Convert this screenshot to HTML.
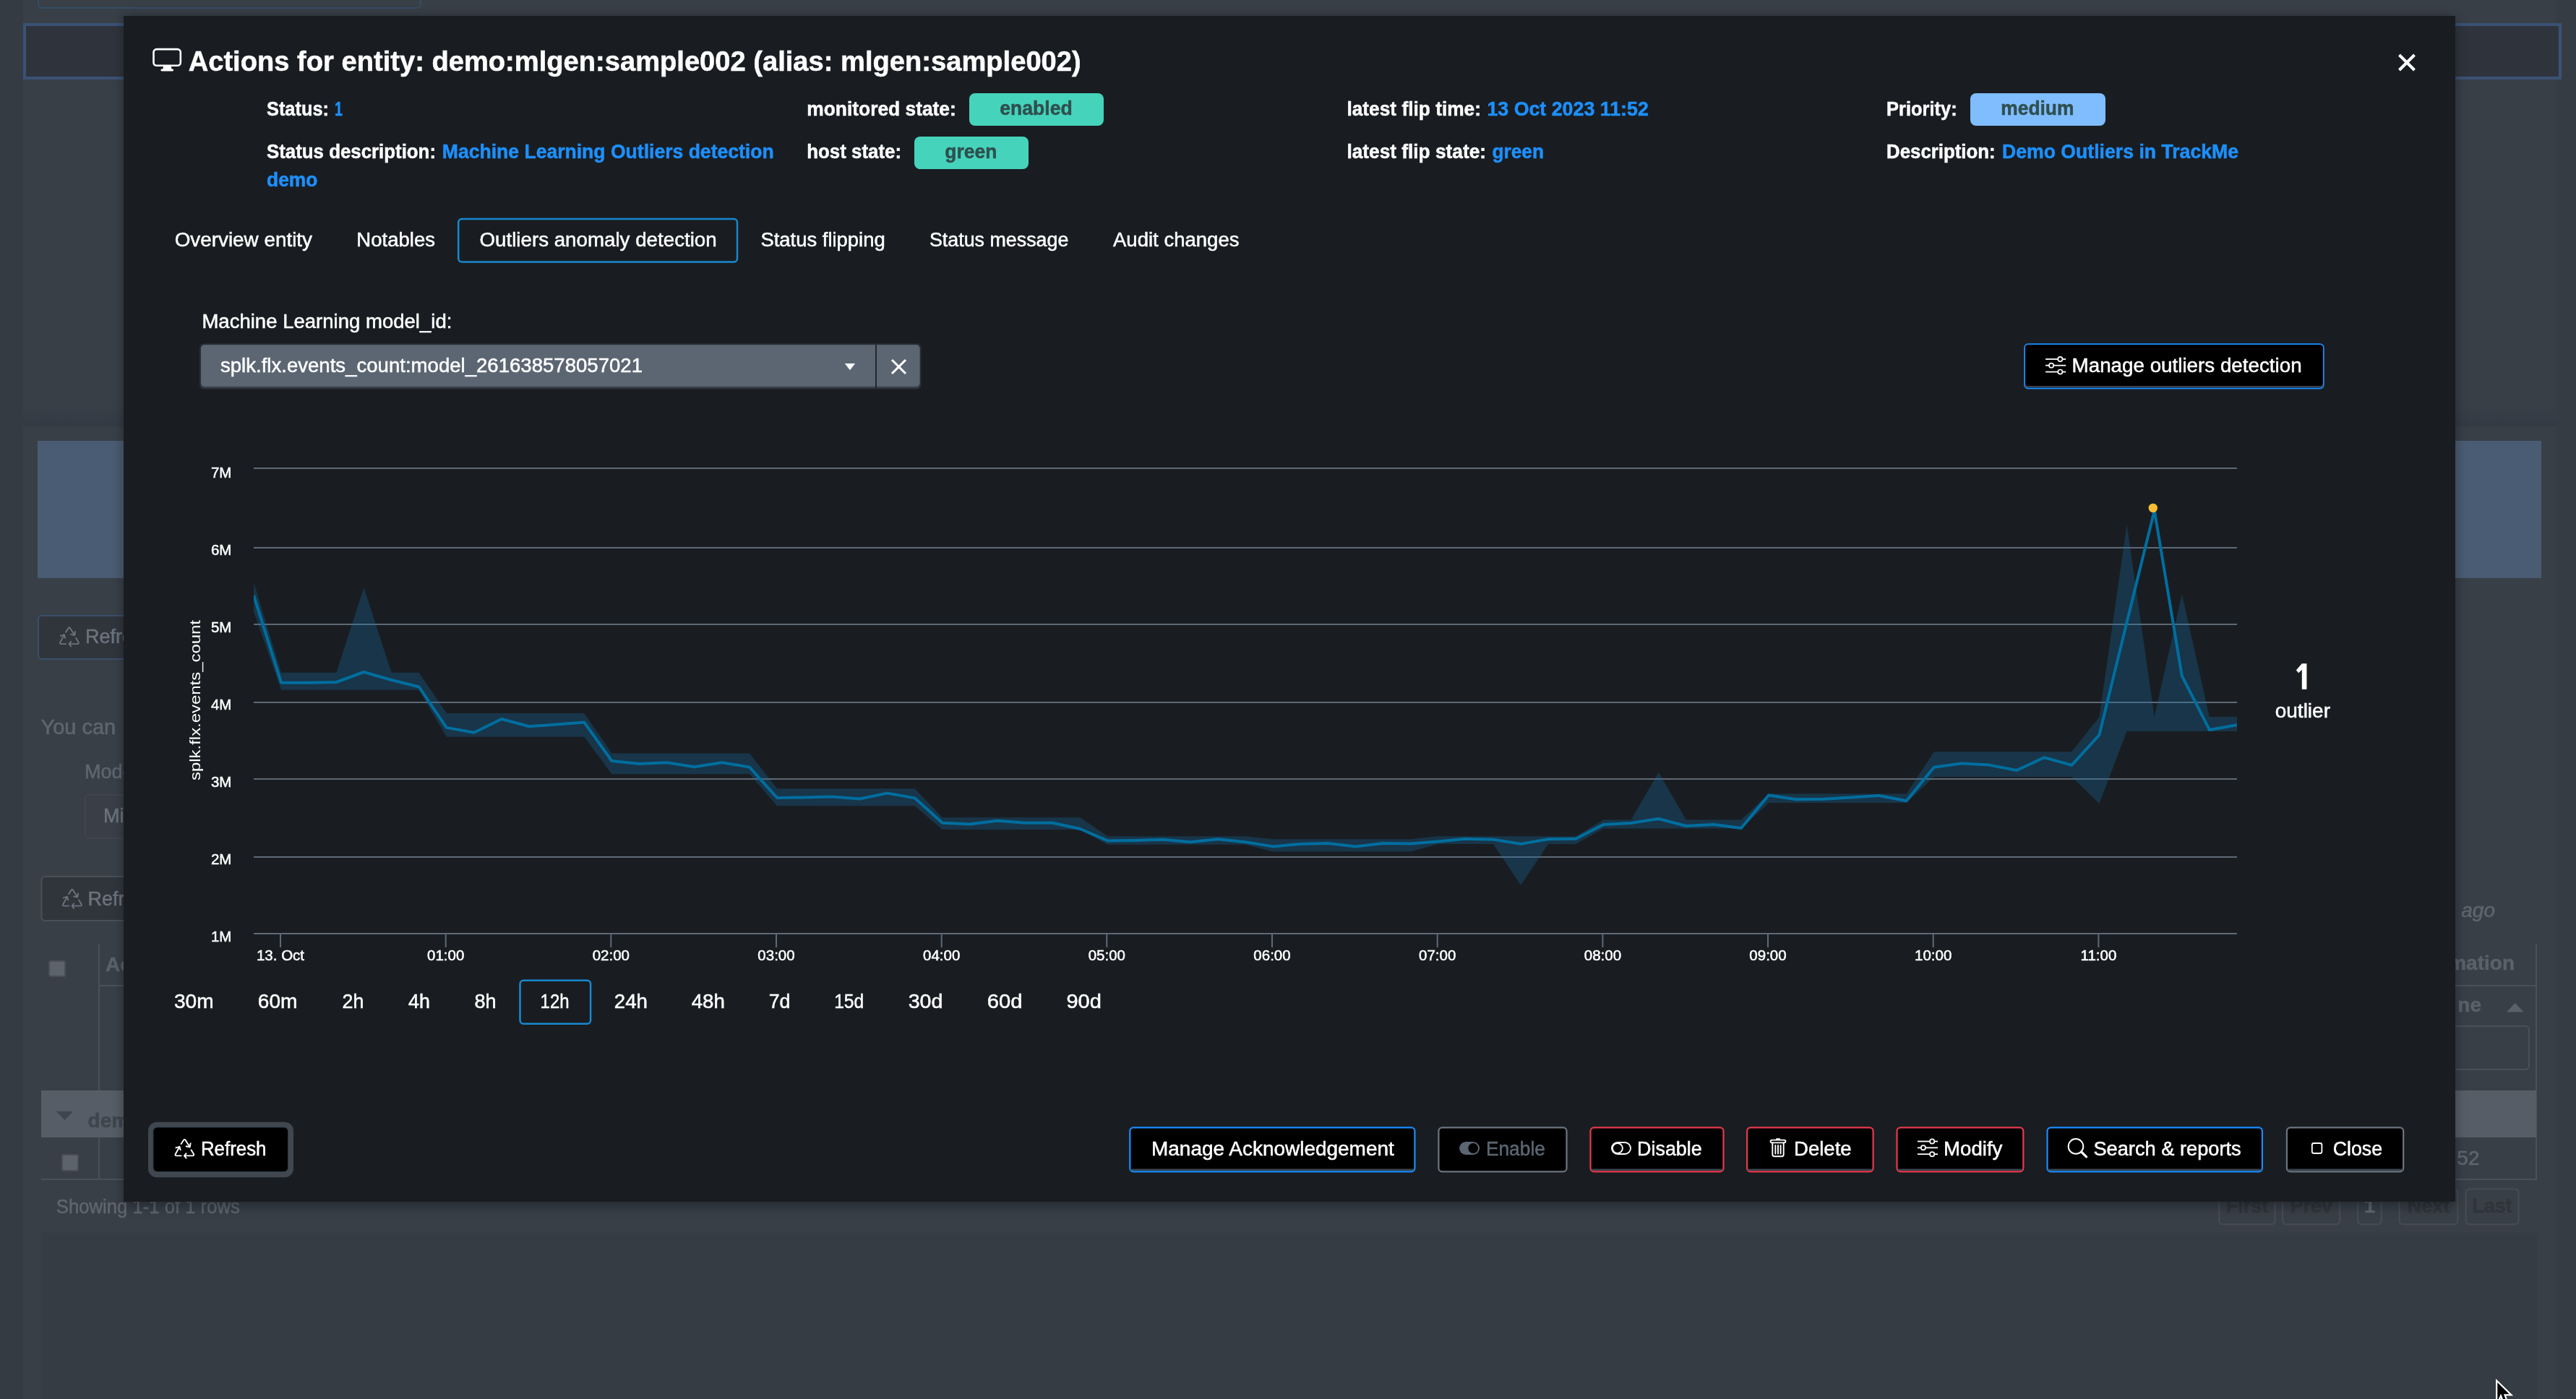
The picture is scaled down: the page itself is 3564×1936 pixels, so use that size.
<!DOCTYPE html>
<html><head><meta charset="utf-8"><title>Actions for entity</title>
<style>
html,body{margin:0;padding:0;width:3564px;height:1936px;overflow:hidden;background:#383f47;}
svg{display:block;font-family:"Liberation Sans", sans-serif;will-change:transform;}
</style></head><body>
<svg width="3564" height="1936" viewBox="0 0 3564 1936">
<rect x="0.0" y="0.0" width="3564.0" height="1936.0" rx="0" fill="#383f47" />
<rect x="0.0" y="0.0" width="32.0" height="1936.0" rx="0" fill="#343b43" />
<rect x="3536.0" y="0.0" width="28.0" height="1936.0" rx="0" fill="#353c44" />
<rect x="53" y="-20" width="529" height="31" rx="5" fill="none" stroke="#344d66" stroke-width="2"/>
<rect x="34.0" y="34.0" width="3508.0" height="74.0" rx="0.0" fill="#2f343c" stroke="#3a5275" stroke-width="4" />
<defs><linearGradient id="bandg" x1="0" y1="0" x2="0" y2="1"><stop offset="0" stop-color="#343a44" stop-opacity="0"/><stop offset="1" stop-color="#343a44" stop-opacity="1"/></linearGradient></defs>
<rect x="32" y="560" width="3504" height="30" fill="url(#bandg)"/>
<rect x="52.0" y="610.0" width="3464.0" height="190.0" rx="0" fill="#4a5c73" />
<rect x="53.0" y="852.0" width="346.0" height="60.0" rx="5.0" fill="#30353c" stroke="#3b4f6c" stroke-width="2" />
<g transform="translate(82 867.5) scale(1.004) translate(-241.5 -1575.9)" fill="none" stroke="#6b737d" stroke-width="1.9" stroke-linecap="round" stroke-linejoin="round"><path d="M250.6 1583 L254 1577.8 Q255.3 1576 256.6 1577.8 L262.6 1587.2"/><path d="M263.6 1582.3 L262.6 1587.4 L257.6 1586.3"/><path d="M264.6 1591.4 L268 1597 Q268.8 1599.4 266.5 1599.4 L255.5 1599.4"/><path d="M257.6 1596.2 L255 1599.4 L257.6 1602.6"/><path d="M250.6 1599.4 L244 1599.4 Q241.6 1599.2 242.8 1597 L248.4 1587"/><path d="M243.3 1588.3 L248.3 1586.8 L249.7 1591.4"/></g>
<text x="118.0" y="889.6" font-size="27" fill="#6b737d" stroke="#6b737d" stroke-width="0.5" >Refresh</text>
<text x="56.5" y="1016.0" font-size="29" fill="#5f6670" stroke="#5f6670" stroke-width="0.5" >You can</text>
<text x="117.0" y="1077.0" font-size="27" fill="#5f6670" stroke="#5f6670" stroke-width="0.5" >Model</text>
<rect x="118.0" y="1100.0" width="281.0" height="60.0" rx="5.0" fill="#3a3f47" stroke="#40454d" stroke-width="2" />
<text x="143.0" y="1138.0" font-size="27" fill="#6b737d" stroke="#6b737d" stroke-width="0.5" >Mi</text>
<rect x="57.5" y="1213.0" width="341.5" height="61.0" rx="5.0" fill="#30353c" stroke="#4a5058" stroke-width="2" />
<g transform="translate(86 1230) scale(1.004) translate(-241.5 -1575.9)" fill="none" stroke="#6b737d" stroke-width="1.9" stroke-linecap="round" stroke-linejoin="round"><path d="M250.6 1583 L254 1577.8 Q255.3 1576 256.6 1577.8 L262.6 1587.2"/><path d="M263.6 1582.3 L262.6 1587.4 L257.6 1586.3"/><path d="M264.6 1591.4 L268 1597 Q268.8 1599.4 266.5 1599.4 L255.5 1599.4"/><path d="M257.6 1596.2 L255 1599.4 L257.6 1602.6"/><path d="M250.6 1599.4 L244 1599.4 Q241.6 1599.2 242.8 1597 L248.4 1587"/><path d="M243.3 1588.3 L248.3 1586.8 L249.7 1591.4"/></g>
<text x="121.6" y="1253.0" font-size="27" fill="#6b737d" stroke="#6b737d" stroke-width="0.5" >Refresh</text>
<line x1="137" y1="1306" x2="137" y2="1509" stroke="#4b5159" stroke-width="2"/>
<line x1="137" y1="1574" x2="137" y2="1633" stroke="#4b5159" stroke-width="2"/>
<line x1="137" y1="1364" x2="3509" y2="1364" stroke="#4b5159" stroke-width="2"/>
<line x1="3509" y1="1306" x2="3509" y2="1633" stroke="#4b5159" stroke-width="2"/>
<rect x="68.0" y="1330.0" width="22.0" height="21.0" rx="2.0" fill="#5c636b" stroke="#4a4f57" stroke-width="2" />
<text x="146.0" y="1344.0" font-size="28" fill="#5a616a" stroke="#5a616a" stroke-width="0.5" font-weight="bold" >Ac</text>
<rect x="57.0" y="1509.0" width="3452.0" height="65.0" rx="0" fill="#565d66" />
<path d="M78 1538 L101 1538 L89.5 1550 Z" fill="#3f454d"/>
<text x="121.6" y="1560.0" font-size="28" fill="#3f454d" stroke="#3f454d" stroke-width="0.5" font-weight="bold" >dem</text>
<rect x="86.0" y="1598.0" width="22.0" height="22.0" rx="2.0" fill="#5c636b" stroke="#4a4f57" stroke-width="2" />
<line x1="57" y1="1632" x2="3509" y2="1632" stroke="#4b5159" stroke-width="2"/>
<text x="77.8" y="1679.0" font-size="27" fill="#5f6670" stroke="#5f6670" stroke-width="0.5" textLength="254.0" lengthAdjust="spacingAndGlyphs" >Showing 1-1 of 1 rows</text>
<rect x="57.0" y="1706.0" width="3453.0" height="230.0" rx="0" fill="#353c44" />
<text x="3452.0" y="1269.0" font-size="28" fill="#5f6670" stroke="#5f6670" stroke-width="0.5" font-style="italic" text-anchor="end">seconds ago</text>
<text x="3479.0" y="1342.0" font-size="28" fill="#5a616a" stroke="#5a616a" stroke-width="0.5" font-weight="bold" text-anchor="end">Information</text>
<text x="3433.0" y="1400.0" font-size="28" fill="#5a616a" stroke="#5a616a" stroke-width="0.5" font-weight="bold" text-anchor="end">ne</text>
<path d="M3468 1400.5 L3491.6 1400.5 L3479.8 1388 Z" fill="#5a616a"/>
<rect x="3301.0" y="1420.0" width="198.0" height="60.0" rx="5.0" fill="none" stroke="#4a5058" stroke-width="2" />
<text x="3430.5" y="1612.0" font-size="28" fill="#5f6670" stroke="#5f6670" stroke-width="0.5" text-anchor="end">11:52</text>
<rect x="3070.4" y="1645.4" width="77.1" height="48.8" rx="5.0" fill="none" stroke="#474d55" stroke-width="2" />
<text x="3108.9" y="1677.7" font-size="27" fill="#30353c" stroke="#30353c" stroke-width="0.5" font-weight="bold" text-anchor="middle" >First</text>
<rect x="3158.2" y="1645.4" width="79.0" height="48.8" rx="5.0" fill="none" stroke="#474d55" stroke-width="2" />
<text x="3197.7" y="1677.7" font-size="27" fill="#30353c" stroke="#30353c" stroke-width="0.5" font-weight="bold" text-anchor="middle" >Prev</text>
<rect x="3262.2" y="1645.4" width="32.4" height="48.8" rx="5.0" fill="none" stroke="#474d55" stroke-width="2" />
<text x="3278.4" y="1677.7" font-size="27" fill="#5f6670" stroke="#5f6670" stroke-width="0.5" font-weight="bold" text-anchor="middle" >1</text>
<rect x="3319.6" y="1645.4" width="80.8" height="48.8" rx="5.0" fill="none" stroke="#474d55" stroke-width="2" />
<text x="3360.0" y="1677.7" font-size="27" fill="#30353c" stroke="#30353c" stroke-width="0.5" font-weight="bold" text-anchor="middle" >Next</text>
<rect x="3411.6" y="1645.4" width="73.1" height="48.8" rx="5.0" fill="none" stroke="#474d55" stroke-width="2" />
<text x="3448.1" y="1677.7" font-size="27" fill="#30353c" stroke="#30353c" stroke-width="0.5" font-weight="bold" text-anchor="middle" >Last</text>
<path d="M3454.2 1910.5 L3454.2 1944 L3460 1931.5 L3465 1944 L3470 1942 L3465.5 1930.4 L3474.5 1930.4 Z" fill="#000" stroke="#fff" stroke-width="2.2" stroke-linejoin="miter"/>
<defs><filter id="sh" x="-5%" y="-5%" width="110%" height="110%"><feGaussianBlur stdDeviation="8"/></filter></defs>
<rect x="171" y="24" width="3226" height="1645" fill="#000" opacity="0.35" filter="url(#sh)"/>
<rect x="171.0" y="22.0" width="3226.0" height="1641.0" rx="0" fill="#191d21" />
<rect x="212.5" y="68.1" width="37.3" height="22.6" rx="4.2" fill="none" stroke="#fff" stroke-width="2.6"/>
<path d="M226 91 L236.8 91 L237.4 96 L225.4 96 Z" fill="#fff"/>
<rect x="222.4" y="95.5" width="17.7" height="2.9" rx="1.4" fill="#fff"/>
<text x="260.7" y="97.6" font-size="38.5" fill="#ffffff" stroke="#ffffff" stroke-width="0.5" font-weight="bold" textLength="1235.0" lengthAdjust="spacingAndGlyphs" >Actions for entity: demo:mlgen:sample002 (alias: mlgen:sample002)</text>
<path d="M3319.5 76 L3340.5 97 M3340.5 76 L3319.5 97" stroke="#fff" stroke-width="4" stroke-linecap="butt"/>
<text x="369.0" y="159.6" font-size="27" fill="#ffffff" stroke="#ffffff" stroke-width="0.5" font-weight="bold" textLength="86.0" lengthAdjust="spacingAndGlyphs" >Status:</text>
<text x="463.0" y="159.6" font-size="27" fill="#1d90ff" stroke="#1d90ff" stroke-width="0.5" font-weight="bold" textLength="11.0" lengthAdjust="spacingAndGlyphs" >1</text>
<text x="1116.3" y="159.6" font-size="27" fill="#ffffff" stroke="#ffffff" stroke-width="0.5" font-weight="bold" textLength="206.5" lengthAdjust="spacingAndGlyphs" >monitored state:</text>
<rect x="1341.0" y="129.0" width="186.0" height="45.0" rx="8" fill="#45d4bb" />
<text x="1383.3" y="158.8" font-size="27" fill="#2f4f4f" stroke="#2f4f4f" stroke-width="0.5" font-weight="bold" textLength="100.4" lengthAdjust="spacingAndGlyphs" >enabled</text>
<text x="1863.4" y="159.6" font-size="27" fill="#ffffff" stroke="#ffffff" stroke-width="0.5" font-weight="bold" textLength="185.6" lengthAdjust="spacingAndGlyphs" >latest flip time:</text>
<text x="2057.4" y="159.6" font-size="27" fill="#1d90ff" stroke="#1d90ff" stroke-width="0.5" font-weight="bold" textLength="223.4" lengthAdjust="spacingAndGlyphs" >13 Oct 2023 11:52</text>
<text x="2610.0" y="159.6" font-size="27" fill="#ffffff" stroke="#ffffff" stroke-width="0.5" font-weight="bold" textLength="97.7" lengthAdjust="spacingAndGlyphs" >Priority:</text>
<rect x="2726.0" y="129.0" width="187.0" height="45.0" rx="8" fill="#80bdff" />
<text x="2768.3" y="159.0" font-size="27" fill="#2f4f4f" stroke="#2f4f4f" stroke-width="0.5" font-weight="bold" textLength="101.1" lengthAdjust="spacingAndGlyphs" >medium</text>
<text x="369.0" y="219.3" font-size="27" fill="#ffffff" stroke="#ffffff" stroke-width="0.5" font-weight="bold" textLength="234.0" lengthAdjust="spacingAndGlyphs" >Status description:</text>
<text x="611.8" y="219.3" font-size="27" fill="#1d90ff" stroke="#1d90ff" stroke-width="0.5" font-weight="bold" textLength="458.9" lengthAdjust="spacingAndGlyphs" >Machine Learning Outliers detection</text>
<text x="369.0" y="258.0" font-size="27" fill="#1d90ff" stroke="#1d90ff" stroke-width="0.5" font-weight="bold" textLength="70.5" lengthAdjust="spacingAndGlyphs" >demo</text>
<text x="1116.3" y="219.3" font-size="27" fill="#ffffff" stroke="#ffffff" stroke-width="0.5" font-weight="bold" textLength="130.7" lengthAdjust="spacingAndGlyphs" >host state:</text>
<rect x="1265.0" y="189.0" width="158.0" height="45.0" rx="8" fill="#45d4bb" />
<text x="1307.3" y="219.3" font-size="27" fill="#2f4f4f" stroke="#2f4f4f" stroke-width="0.5" font-weight="bold" textLength="72.0" lengthAdjust="spacingAndGlyphs" >green</text>
<text x="1863.4" y="219.3" font-size="27" fill="#ffffff" stroke="#ffffff" stroke-width="0.5" font-weight="bold" textLength="192.6" lengthAdjust="spacingAndGlyphs" >latest flip state:</text>
<text x="2064.5" y="219.3" font-size="27" fill="#1d90ff" stroke="#1d90ff" stroke-width="0.5" font-weight="bold" textLength="71.5" lengthAdjust="spacingAndGlyphs" >green</text>
<text x="2610.0" y="219.3" font-size="27" fill="#ffffff" stroke="#ffffff" stroke-width="0.5" font-weight="bold" textLength="150.7" lengthAdjust="spacingAndGlyphs" >Description:</text>
<text x="2770.0" y="219.3" font-size="27" fill="#1d90ff" stroke="#1d90ff" stroke-width="0.5" font-weight="bold" textLength="327.0" lengthAdjust="spacingAndGlyphs" >Demo Outliers in TrackMe</text>
<text x="241.7" y="341.2" font-size="27" fill="#ffffff" stroke="#ffffff" stroke-width="0.5" textLength="190.3" lengthAdjust="spacingAndGlyphs" >Overview entity</text>
<text x="493.3" y="341.2" font-size="27" fill="#ffffff" stroke="#ffffff" stroke-width="0.5" textLength="108.7" lengthAdjust="spacingAndGlyphs" >Notables</text>
<rect x="634.2" y="302.9" width="385.8" height="59.6" rx="4.8" fill="none" stroke="#1789d0" stroke-width="2.5" />
<text x="663.5" y="341.2" font-size="27" fill="#ffffff" stroke="#ffffff" stroke-width="0.5" textLength="328.2" lengthAdjust="spacingAndGlyphs" >Outliers anomaly detection</text>
<text x="1052.4" y="341.2" font-size="27" fill="#ffffff" stroke="#ffffff" stroke-width="0.5" textLength="172.3" lengthAdjust="spacingAndGlyphs" >Status flipping</text>
<text x="1285.9" y="341.2" font-size="27" fill="#ffffff" stroke="#ffffff" stroke-width="0.5" textLength="192.5" lengthAdjust="spacingAndGlyphs" >Status message</text>
<text x="1540.0" y="341.2" font-size="27" fill="#ffffff" stroke="#ffffff" stroke-width="0.5" textLength="174.5" lengthAdjust="spacingAndGlyphs" >Audit changes</text>
<text x="279.4" y="453.6" font-size="27" fill="#ffffff" stroke="#ffffff" stroke-width="0.5" textLength="346.0" lengthAdjust="spacingAndGlyphs" >Machine Learning model_id:</text>
<rect x="276.0" y="475.2" width="998.5" height="63.5" rx="6" fill="#2a2f35" />
<rect x="278.0" y="477.2" width="994.5" height="59.5" rx="5" fill="#3d4450" />
<rect x="278.0" y="477.2" width="994.5" height="57.5" rx="5" fill="#5c6673" />
<rect x="1211.0" y="477.0" width="2.0" height="60.0" rx="0" fill="#22272c" />
<text x="305.0" y="515.0" font-size="27" fill="#ffffff" stroke="#ffffff" stroke-width="0.5" textLength="584.0" lengthAdjust="spacingAndGlyphs" >splk.flx.events_count:model_261638578057021</text>
<path d="M1168.8 502.9 L1183.1 502.9 L1176 512.2 Z" fill="#fff"/>
<path d="M1234 498 L1253 517 M1253 498 L1234 517" stroke="#fff" stroke-width="3"/>
<rect x="2801.2" y="476.2" width="413.5" height="61.4" rx="5.0" fill="#000" stroke="#1a8cff" stroke-width="2" />
<rect x="2802.5" y="532" width="411" height="4" fill="#3a4048"/>
<rect x="2802.2" y="477.2" width="411.5" height="56.8" rx="4" fill="#000" />
<line x1="2830.1" y1="497" x2="2858.2" y2="497" stroke="#fff" stroke-width="1.8"/>
<circle cx="2850.4" cy="497" r="3.1" fill="#000" stroke="#fff" stroke-width="1.7"/>
<line x1="2830.1" y1="505.7" x2="2858.2" y2="505.7" stroke="#fff" stroke-width="1.8"/>
<circle cx="2838.1" cy="505.7" r="3.1" fill="#000" stroke="#fff" stroke-width="1.7"/>
<line x1="2830.1" y1="514.6" x2="2858.2" y2="514.6" stroke="#fff" stroke-width="1.8"/>
<circle cx="2850.4" cy="514.6" r="3.1" fill="#000" stroke="#fff" stroke-width="1.7"/>
<text x="2866.6" y="514.5" font-size="27" fill="#ffffff" stroke="#ffffff" stroke-width="0.5" textLength="318.0" lengthAdjust="spacingAndGlyphs" >Manage outliers detection</text>
<rect x="351" y="647" width="2744" height="2" fill="#5f6976"/>
<text x="320.4" y="661.2" font-size="20.5" fill="#ffffff" stroke="#ffffff" stroke-width="0.5" text-anchor="end" >7M</text>
<rect x="351" y="757" width="2744" height="2" fill="#5f6976"/>
<text x="320.4" y="768.2" font-size="20.5" fill="#ffffff" stroke="#ffffff" stroke-width="0.5" text-anchor="end" >6M</text>
<rect x="351" y="863" width="2744" height="2" fill="#5f6976"/>
<text x="320.4" y="875.1" font-size="20.5" fill="#ffffff" stroke="#ffffff" stroke-width="0.5" text-anchor="end" >5M</text>
<rect x="351" y="971" width="2744" height="2" fill="#5f6976"/>
<text x="320.4" y="982.1" font-size="20.5" fill="#ffffff" stroke="#ffffff" stroke-width="0.5" text-anchor="end" >4M</text>
<rect x="351" y="1077" width="2744" height="2" fill="#5f6976"/>
<text x="320.4" y="1089.0" font-size="20.5" fill="#ffffff" stroke="#ffffff" stroke-width="0.5" text-anchor="end" >3M</text>
<rect x="351" y="1185" width="2744" height="2" fill="#5f6976"/>
<text x="320.4" y="1196.0" font-size="20.5" fill="#ffffff" stroke="#ffffff" stroke-width="0.5" text-anchor="end" >2M</text>
<rect x="351" y="1291" width="2744" height="2" fill="#5f6976"/>
<text x="320.4" y="1302.9" font-size="20.5" fill="#ffffff" stroke="#ffffff" stroke-width="0.5" text-anchor="end" >1M</text>
<rect x="387.0" y="1292" width="2" height="19" fill="#5f6976"/>
<text x="388.0" y="1329.0" font-size="20.5" fill="#ffffff" stroke="#ffffff" stroke-width="0.5" text-anchor="middle" >13. Oct</text>
<rect x="615.7" y="1292" width="2" height="19" fill="#5f6976"/>
<text x="616.7" y="1329.0" font-size="20.5" fill="#ffffff" stroke="#ffffff" stroke-width="0.5" text-anchor="middle" >01:00</text>
<rect x="844.3" y="1292" width="2" height="19" fill="#5f6976"/>
<text x="845.3" y="1329.0" font-size="20.5" fill="#ffffff" stroke="#ffffff" stroke-width="0.5" text-anchor="middle" >02:00</text>
<rect x="1073.0" y="1292" width="2" height="19" fill="#5f6976"/>
<text x="1074.0" y="1329.0" font-size="20.5" fill="#ffffff" stroke="#ffffff" stroke-width="0.5" text-anchor="middle" >03:00</text>
<rect x="1301.7" y="1292" width="2" height="19" fill="#5f6976"/>
<text x="1302.7" y="1329.0" font-size="20.5" fill="#ffffff" stroke="#ffffff" stroke-width="0.5" text-anchor="middle" >04:00</text>
<rect x="1530.3" y="1292" width="2" height="19" fill="#5f6976"/>
<text x="1531.3" y="1329.0" font-size="20.5" fill="#ffffff" stroke="#ffffff" stroke-width="0.5" text-anchor="middle" >05:00</text>
<rect x="1759.0" y="1292" width="2" height="19" fill="#5f6976"/>
<text x="1760.0" y="1329.0" font-size="20.5" fill="#ffffff" stroke="#ffffff" stroke-width="0.5" text-anchor="middle" >06:00</text>
<rect x="1987.7" y="1292" width="2" height="19" fill="#5f6976"/>
<text x="1988.7" y="1329.0" font-size="20.5" fill="#ffffff" stroke="#ffffff" stroke-width="0.5" text-anchor="middle" >07:00</text>
<rect x="2216.4" y="1292" width="2" height="19" fill="#5f6976"/>
<text x="2217.4" y="1329.0" font-size="20.5" fill="#ffffff" stroke="#ffffff" stroke-width="0.5" text-anchor="middle" >08:00</text>
<rect x="2445.0" y="1292" width="2" height="19" fill="#5f6976"/>
<text x="2446.0" y="1329.0" font-size="20.5" fill="#ffffff" stroke="#ffffff" stroke-width="0.5" text-anchor="middle" >09:00</text>
<rect x="2673.7" y="1292" width="2" height="19" fill="#5f6976"/>
<text x="2674.7" y="1329.0" font-size="20.5" fill="#ffffff" stroke="#ffffff" stroke-width="0.5" text-anchor="middle" >10:00</text>
<rect x="2902.4" y="1292" width="2" height="19" fill="#5f6976"/>
<text x="2903.4" y="1329.0" font-size="20.5" fill="#ffffff" stroke="#ffffff" stroke-width="0.5" text-anchor="middle" >11:00</text>
<text x="0" y="0" font-size="21" fill="#fff" text-anchor="middle" transform="translate(276.6 969) rotate(-90)" textLength="222" lengthAdjust="spacingAndGlyphs">splk.flx.events_count</text>
<polygon points="351.0,805.7 389.1,930.8 427.2,930.8 465.3,930.8 503.4,813.2 541.6,930.8 579.7,930.8 617.8,987.0 655.9,987.0 694.0,987.0 732.1,987.0 770.2,987.0 808.3,987.0 846.4,1042.5 884.6,1042.5 922.7,1042.5 960.8,1042.5 998.9,1042.5 1037.0,1042.5 1075.1,1091.2 1113.2,1091.2 1151.3,1091.2 1189.4,1091.2 1227.6,1091.2 1265.7,1091.2 1303.8,1131.3 1341.9,1131.3 1380.0,1131.3 1418.1,1131.3 1456.2,1131.3 1494.3,1131.3 1532.4,1157.2 1570.6,1157.2 1608.7,1157.2 1646.8,1157.2 1684.9,1157.2 1723.0,1157.2 1761.1,1161.2 1799.2,1161.2 1837.3,1161.2 1875.4,1161.2 1913.6,1161.2 1951.7,1161.2 1989.8,1157.2 2027.9,1157.2 2066.0,1157.2 2104.1,1157.2 2142.2,1157.2 2180.3,1157.2 2218.4,1134.5 2256.6,1134.5 2294.7,1068.8 2332.8,1134.5 2370.9,1134.5 2409.0,1134.5 2447.1,1098.6 2485.2,1098.6 2523.3,1098.6 2561.4,1098.6 2599.6,1098.6 2637.7,1098.6 2675.8,1040.3 2713.9,1040.3 2752.0,1040.3 2790.1,1040.3 2828.2,1040.3 2866.3,1040.3 2904.4,992.0 2942.6,726.3 2980.7,991.6 3018.8,822.3 3056.9,992.0 3095.0,992.0 3095.0,1012.0 3056.9,1012.0 3018.8,1012.0 2980.7,1012.0 2942.6,1012.0 2904.4,1112.1 2866.3,1075.0 2828.2,1075.0 2790.1,1075.0 2752.0,1075.0 2713.9,1075.0 2675.8,1075.0 2637.7,1111.0 2599.6,1111.0 2561.4,1111.0 2523.3,1111.0 2485.2,1111.0 2447.1,1111.0 2409.0,1146.5 2370.9,1146.5 2332.8,1146.5 2294.7,1146.5 2256.6,1146.5 2218.4,1146.5 2180.3,1167.9 2142.2,1167.9 2104.1,1225.0 2066.0,1167.9 2027.9,1167.9 1989.8,1167.9 1951.7,1178.6 1913.6,1178.6 1875.4,1178.6 1837.3,1178.6 1799.2,1178.6 1761.1,1178.6 1723.0,1168.8 1684.9,1168.8 1646.8,1168.8 1608.7,1168.8 1570.6,1168.8 1532.4,1168.8 1494.3,1148.0 1456.2,1148.0 1418.1,1148.0 1380.0,1148.0 1341.9,1148.0 1303.8,1148.0 1265.7,1115.3 1227.6,1115.3 1189.4,1115.3 1151.3,1115.3 1113.2,1115.3 1075.1,1115.3 1037.0,1071.3 998.9,1071.3 960.8,1071.3 922.7,1071.3 884.6,1071.3 846.4,1071.3 808.3,1019.8 770.2,1019.8 732.1,1019.8 694.0,1019.8 655.9,1019.8 617.8,1019.8 579.7,954.8 541.6,954.8 503.4,954.8 465.3,954.8 427.2,954.8 389.1,954.8 351.0,846.5" fill="rgb(20,120,180)" fill-opacity="0.28"/>
<clipPath id="plot"><rect x="351" y="600" width="2744" height="700"/></clipPath>
<polyline points="351.0,824.0 389.1,944.7 427.2,944.7 465.3,944.0 503.4,930.0 541.6,941.0 579.7,950.5 617.8,1006.9 655.9,1013.8 694.0,995.0 732.1,1005.3 770.2,1002.6 808.3,999.6 846.4,1053.0 884.6,1056.9 922.7,1055.2 960.8,1061.2 998.9,1055.2 1037.0,1061.6 1075.1,1104.0 1113.2,1103.5 1151.3,1102.5 1189.4,1105.5 1227.6,1097.6 1265.7,1104.4 1303.8,1138.8 1341.9,1140.5 1380.0,1135.8 1418.1,1138.8 1456.2,1138.8 1494.3,1147.0 1532.4,1163.4 1570.6,1162.9 1608.7,1161.7 1646.8,1165.3 1684.9,1161.2 1723.0,1165.3 1761.1,1171.4 1799.2,1167.9 1837.3,1167.0 1875.4,1171.4 1913.6,1167.0 1951.7,1167.4 1989.8,1164.4 2027.9,1160.8 2066.0,1161.7 2104.1,1167.9 2142.2,1161.2 2180.3,1160.8 2218.4,1141.0 2256.6,1139.0 2294.7,1133.0 2332.8,1143.0 2370.9,1141.1 2409.0,1146.0 2447.1,1100.4 2485.2,1106.3 2523.3,1105.7 2561.4,1103.6 2599.6,1101.0 2637.7,1108.3 2675.8,1061.7 2713.9,1056.4 2752.0,1058.6 2790.1,1066.0 2828.2,1048.3 2866.3,1058.9 2904.4,1017.1 2942.6,861.0 2980.7,706.4 3018.8,935.3 3056.9,1010.0 3095.0,1003.3" fill="none" stroke="#006e9f" stroke-width="4" stroke-linejoin="round" clip-path="url(#plot)"/>
<circle cx="2978.8" cy="703" r="6.2" fill="#f8be34"/>
<path d="M3184.8 918.2 L3191.4 918.2 L3191.4 954.1 L3184.8 954.1 L3184.8 926.8 L3180.2 931.2 L3176.8 927.6 Z" fill="#fff"/>
<text x="3147.7" y="993.2" font-size="27" fill="#ffffff" stroke="#ffffff" stroke-width="0.5" textLength="76.3" lengthAdjust="spacingAndGlyphs" >outlier</text>
<text x="241.0" y="1394.8" font-size="27" fill="#ffffff" stroke="#ffffff" stroke-width="0.5" textLength="54.6" lengthAdjust="spacingAndGlyphs" >30m</text>
<text x="356.8" y="1394.8" font-size="27" fill="#ffffff" stroke="#ffffff" stroke-width="0.5" textLength="54.6" lengthAdjust="spacingAndGlyphs" >60m</text>
<text x="473.6" y="1394.8" font-size="27" fill="#ffffff" stroke="#ffffff" stroke-width="0.5" textLength="29.9" lengthAdjust="spacingAndGlyphs" >2h</text>
<text x="565.0" y="1394.8" font-size="27" fill="#ffffff" stroke="#ffffff" stroke-width="0.5" textLength="29.8" lengthAdjust="spacingAndGlyphs" >4h</text>
<text x="656.4" y="1394.8" font-size="27" fill="#ffffff" stroke="#ffffff" stroke-width="0.5" textLength="30.1" lengthAdjust="spacingAndGlyphs" >8h</text>
<text x="747.6" y="1394.8" font-size="27" fill="#ffffff" stroke="#ffffff" stroke-width="0.5" textLength="40.0" lengthAdjust="spacingAndGlyphs" >12h</text>
<text x="849.8" y="1394.8" font-size="27" fill="#ffffff" stroke="#ffffff" stroke-width="0.5" textLength="46.2" lengthAdjust="spacingAndGlyphs" >24h</text>
<text x="956.7" y="1394.8" font-size="27" fill="#ffffff" stroke="#ffffff" stroke-width="0.5" textLength="46.2" lengthAdjust="spacingAndGlyphs" >48h</text>
<text x="1063.7" y="1394.8" font-size="27" fill="#ffffff" stroke="#ffffff" stroke-width="0.5" textLength="29.7" lengthAdjust="spacingAndGlyphs" >7d</text>
<text x="1154.2" y="1394.8" font-size="27" fill="#ffffff" stroke="#ffffff" stroke-width="0.5" textLength="41.0" lengthAdjust="spacingAndGlyphs" >15d</text>
<text x="1256.7" y="1394.8" font-size="27" fill="#ffffff" stroke="#ffffff" stroke-width="0.5" textLength="47.8" lengthAdjust="spacingAndGlyphs" >30d</text>
<text x="1365.7" y="1394.8" font-size="27" fill="#ffffff" stroke="#ffffff" stroke-width="0.5" textLength="48.8" lengthAdjust="spacingAndGlyphs" >60d</text>
<text x="1475.4" y="1394.8" font-size="27" fill="#ffffff" stroke="#ffffff" stroke-width="0.5" textLength="48.5" lengthAdjust="spacingAndGlyphs" >90d</text>
<rect x="719.5" y="1356.7" width="97.6" height="60.0" rx="4.8" fill="none" stroke="#1789d0" stroke-width="2.5" />
<rect x="205" y="1552.7" width="201" height="76.5" rx="12" fill="#40474f"/>
<rect x="211.5" y="1559.5" width="187.5" height="62.5" rx="6" fill="#2b3a48"/>
<rect x="212.5" y="1560.5" width="185.5" height="60.5" rx="5" fill="#000"/>
<g fill="none" stroke="#fff" stroke-width="1.9" stroke-linecap="round" stroke-linejoin="round"><path d="M250.6 1583 L254 1577.8 Q255.3 1576 256.6 1577.8 L262.6 1587.2"/><path d="M263.6 1582.3 L262.6 1587.4 L257.6 1586.3"/><path d="M264.6 1591.4 L268 1597 Q268.8 1599.4 266.5 1599.4 L255.5 1599.4"/><path d="M257.6 1596.2 L255 1599.4 L257.6 1602.6"/><path d="M250.6 1599.4 L244 1599.4 Q241.6 1599.2 242.8 1597 L248.4 1587"/><path d="M243.3 1588.3 L248.3 1586.8 L249.7 1591.4"/></g>
<text x="277.9" y="1598.8" font-size="27" fill="#ffffff" stroke="#ffffff" stroke-width="0.5" textLength="90.6" lengthAdjust="spacingAndGlyphs" >Refresh</text>
<rect x="1563.3" y="1560.4" width="394.1" height="61.0" rx="4.9" fill="#000" stroke="#1a8cff" stroke-width="2.2" />
<rect x="1564.7" y="1617.5" width="391.3" height="2.5" fill="#3a454e"/>
<text x="1593.0" y="1598.8" font-size="27" fill="#ffffff" stroke="#ffffff" stroke-width="0.5" textLength="335.8" lengthAdjust="spacingAndGlyphs" >Manage Acknowledgement</text>
<rect x="1990.4" y="1560.4" width="177.1" height="61.0" rx="4.9" fill="#000" stroke="#6c7580" stroke-width="2.2" />
<rect x="2019.1" y="1580" width="28" height="18" rx="9" fill="#5c6673"/>
<circle cx="2038.2" cy="1589" r="6.9" fill="#000"/>
<text x="2055.9" y="1598.8" font-size="27" fill="#5c6673" stroke="#5c6673" stroke-width="0.5" textLength="82.0" lengthAdjust="spacingAndGlyphs" >Enable</text>
<rect x="2200.5" y="1560.4" width="184.0" height="61.0" rx="4.9" fill="#000" stroke="#e8394d" stroke-width="2.2" />
<rect x="2201.9" y="1617.5" width="181.2" height="2.5" fill="#3a454e"/>
<rect x="2230" y="1581" width="26" height="16" rx="8" fill="none" stroke="#fff" stroke-width="1.9"/>
<circle cx="2237.9" cy="1589" r="7" fill="none" stroke="#fff" stroke-width="1.9"/>
<text x="2265.0" y="1598.8" font-size="27" fill="#ffffff" stroke="#ffffff" stroke-width="0.5" textLength="89.8" lengthAdjust="spacingAndGlyphs" >Disable</text>
<rect x="2417.1" y="1560.4" width="174.5" height="61.0" rx="4.9" fill="#000" stroke="#e8394d" stroke-width="2.2" />
<rect x="2418.5" y="1617.5" width="171.7" height="2.5" fill="#3a454e"/>
<g fill="none" stroke="#fff" stroke-width="1.9" stroke-linecap="round"><rect x="2449.6" y="1577.6" width="20.8" height="3.8" rx="1.8"/><path d="M2452.3 1581.5 L2452.3 1597.5 Q2452.3 1600.3 2455 1600.3 L2465 1600.3 Q2467.7 1600.3 2467.7 1597.5 L2467.7 1581.5"/><path d="M2456.4 1585 L2456.4 1596.5 M2460 1585 L2460 1596.5 M2463.6 1585 L2463.6 1596.5"/></g>
<path d="M2456.5 1577.6 L2457.5 1575.2 L2462.5 1575.2 L2463.5 1577.6 Z" fill="#fff"/>
<text x="2482.0" y="1598.8" font-size="27" fill="#ffffff" stroke="#ffffff" stroke-width="0.5" textLength="79.7" lengthAdjust="spacingAndGlyphs" >Delete</text>
<rect x="2624.5" y="1560.4" width="174.8" height="61.0" rx="4.9" fill="#000" stroke="#e8394d" stroke-width="2.2" />
<rect x="2625.9" y="1617.5" width="172.0" height="2.5" fill="#3a454e"/>
<line x1="2653" y1="1579.5" x2="2681" y2="1579.5" stroke="#fff" stroke-width="1.8"/>
<circle cx="2673.2" cy="1579.5" r="3.1" fill="#000" stroke="#fff" stroke-width="1.7"/>
<line x1="2653" y1="1588.3" x2="2681" y2="1588.3" stroke="#fff" stroke-width="1.8"/>
<circle cx="2660.9" cy="1588.3" r="3.1" fill="#000" stroke="#fff" stroke-width="1.7"/>
<line x1="2653" y1="1597.2" x2="2681" y2="1597.2" stroke="#fff" stroke-width="1.8"/>
<circle cx="2673.2" cy="1597.2" r="3.1" fill="#000" stroke="#fff" stroke-width="1.7"/>
<text x="2689.0" y="1598.8" font-size="27" fill="#ffffff" stroke="#ffffff" stroke-width="0.5" textLength="81.4" lengthAdjust="spacingAndGlyphs" >Modify</text>
<rect x="2832.5" y="1560.4" width="297.4" height="61.0" rx="4.9" fill="#000" stroke="#1a8cff" stroke-width="2.2" />
<rect x="2833.9" y="1617.5" width="294.6" height="2.5" fill="#3a454e"/>
<circle cx="2872" cy="1586.4" r="10.3" fill="none" stroke="#fff" stroke-width="2"/>
<path d="M2879.6 1594 L2886.6 1600.8" stroke="#fff" stroke-width="3.2" stroke-linecap="round"/>
<text x="2896.4" y="1598.8" font-size="27" fill="#ffffff" stroke="#ffffff" stroke-width="0.5" textLength="204.3" lengthAdjust="spacingAndGlyphs" >Search &amp; reports</text>
<rect x="3163.9" y="1560.4" width="161.3" height="61.0" rx="4.9" fill="#000" stroke="#6c7580" stroke-width="2.2" />
<rect x="3165.3" y="1617.5" width="158.5" height="2.5" fill="#3a454e"/>
<rect x="3198.8" y="1582" width="13.6" height="14" rx="2.5" fill="none" stroke="#fff" stroke-width="1.8"/>
<text x="3227.7" y="1598.8" font-size="27" fill="#ffffff" stroke="#ffffff" stroke-width="0.5" textLength="68.3" lengthAdjust="spacingAndGlyphs" >Close</text>
</svg>
</body></html>
